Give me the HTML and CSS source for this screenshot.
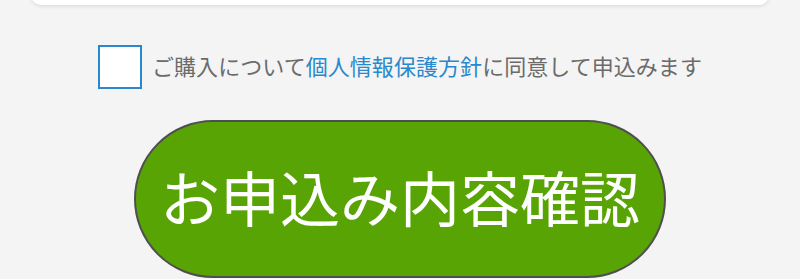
FILE: index.html
```html
<!DOCTYPE html>
<html lang="ja">
<head>
  <meta charset="UTF-8" />
  <title>お申込み</title>
  <link rel="stylesheet" href="styles.css">
</head>
<body>
  <div class="page">
    <div class="form-card"></div>

    <label class="agree">
      <input type="checkbox" class="agree-check">
      <span class="agree-box"></span>
      <span class="agree-text">ご購入について<a href="#" class="agree-link">個人情報保護方針</a>に同意して申込みます</span>
    </label>

    <button class="submit">お申込み内容確認</button>
  </div>
</body>
</html>
```

FILE: styles.css
```css
* {
  margin: 0;
  padding: 0;
  box-sizing: border-box;
}
body {
  background: #f4f4f4;
  font-family: "Noto Sans CJK JP", "Noto Sans", sans-serif;
  overflow: hidden;
}
.page {
  display: flex;
  flex-direction: column;
  align-items: center;
}
.form-card {
  align-self: stretch;
  margin: -40px 31px 0;
  height: 45px;
  background: #fff;
  border-radius: 10px;
  box-shadow: 0 1px 4px rgba(0, 0, 0, 0.12);
}
.agree {
  display: flex;
  align-items: center;
  gap: 10px;
  margin-top: 40px;
  cursor: pointer;
}
.agree-check {
  display: none;
}
.agree-box {
  width: 44px;
  height: 44px;
  background: #fff;
  border: 2px solid #2a88cc;
}
.agree-text {
  font-size: 22px;
  color: #6b6b6b;
  line-height: 1;
  letter-spacing: 0.05px;
  padding-bottom: 5px;
}
.agree-link {
  color: #2a88cc;
  text-decoration: none;
}
.submit {
  margin-top: 31px;
  width: 532px;
  height: 158px;
  background: #59a405;
  border: 2px solid #4f4f4f;
  border-radius: 80px;
  color: #fff;
  font-family: inherit;
  font-size: 60px;
  line-height: 1;
  padding-bottom: 6px;
  cursor: pointer;
}
```
